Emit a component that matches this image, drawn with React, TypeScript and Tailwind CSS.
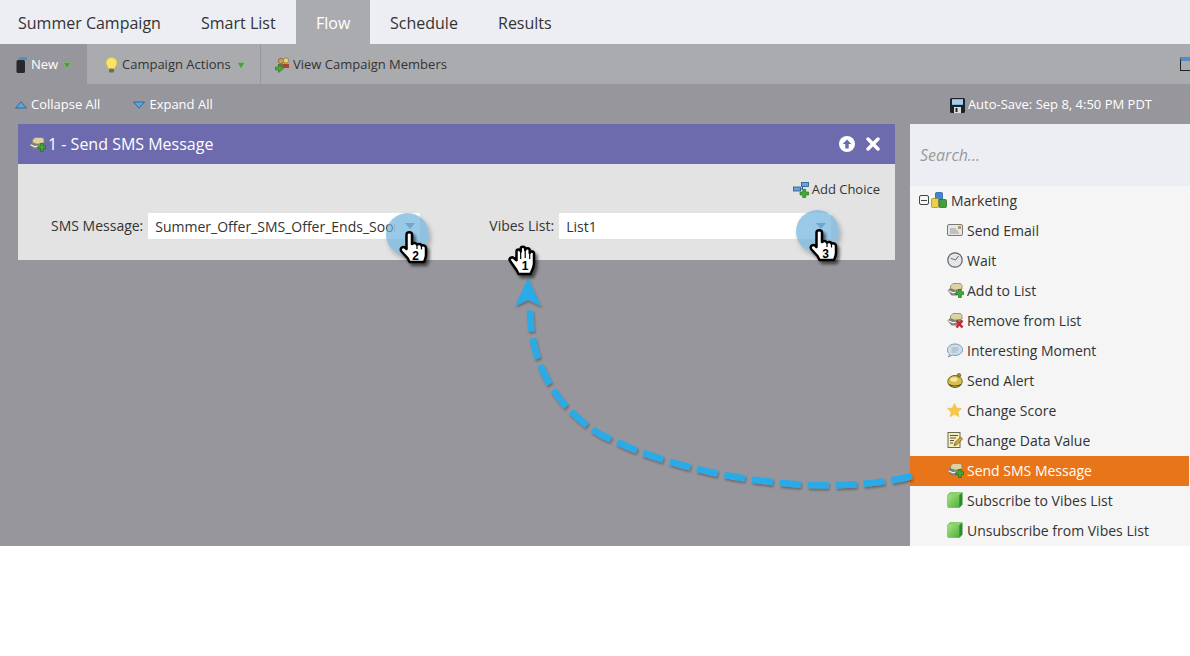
import type { ReactNode } from "react";

function CaretGreen() {
  return (
    <svg width="8" height="7" viewBox="0 0 8 7" className="shrink-0">
      <path d="M0.300 0.600h7.400L4 6.800z" fill="#4f9d33" stroke="#a9d68e" strokeWidth="0.400" />
    </svg>
  );
}

function ListIcon({ mark = "plus" }: { mark?: "plus" | "x" }) {
  return (
    <svg width="17" height="16" viewBox="0 0 17 16" className="shrink-0">
      <path d="M0.500 8.500 5 4.500h9v5l-4 4H4.500z" fill="#7f7f7b" />
      <path d="M1.500 8.800 6 10.800l6-1.500" stroke="#f4f4f0" strokeWidth="1.100" fill="none" />
      <path d="M3.500 4 6 1.500h7.500l1.500 2v3.500L8 8.200 3.500 6.500z" fill="#dcd3a0" stroke="#8a8560" strokeWidth="0.800" />
      {mark === "plus" ? (
        <path d="M9 9.800h2.500V7.500h2.800v2.300h2.300v2.800h-2.300v2.900h-2.800v-2.900H9z" fill="#45a838" stroke="#1d6d1c" strokeWidth="0.700" />
      ) : (
        <path d="M9.500 8.500 15.500 15.500M15.500 8.500 9.500 15.500" stroke="#c9252b" strokeWidth="2.400" />
      )}
    </svg>
  );
}

function MailIcon() {
  return (
    <svg width="16" height="14" viewBox="0 0 16 14" className="shrink-0">
      <rect x="0.500" y="1.500" width="15" height="11" rx="1.500" fill="#e6e6e4" stroke="#77797b" />
      <rect x="11" y="3" width="3" height="3" fill="#b59b55" />
      <path d="M3 6h6M3 8h8M3 10h9" stroke="#85878a" strokeWidth="0.800" />
    </svg>
  );
}

function ClockIcon() {
  return (
    <svg width="16" height="16" viewBox="0 0 16 16" className="shrink-0">
      <circle cx="8" cy="8" r="7.200" fill="#e4e7ea" stroke="#5d6268" strokeWidth="1.200" />
      <path d="M8.500 8 3.800 6.300M8.500 8l3-4" stroke="#555b61" strokeWidth="0.900" fill="none" />
    </svg>
  );
}

function ChatIcon() {
  return (
    <svg width="16" height="15" viewBox="0 0 16 15" className="shrink-0">
      <path d="M8 1c4 0 7.500 2.500 7.500 5.700s-3.500 5.700-7.500 5.700c-1 0-2-.1-2.800-.4L1.500 14l1-3C1.200 10 .5 8.500.5 6.700.5 3.500 4 1 8 1z" fill="#cfdfea" stroke="#7f98aa" />
      <path d="M4.500 5h7M4.500 7h7M4.500 9h5" stroke="#8da3b2" strokeWidth="0.800" />
    </svg>
  );
}

function BellIcon() {
  return (
    <svg width="16" height="15" viewBox="0 0 16 15" className="shrink-0">
      <ellipse cx="8" cy="8.500" rx="7.200" ry="6" fill="#d8bf4c" stroke="#6f5f1a" />
      <ellipse cx="7" cy="6.500" rx="3.500" ry="2.200" fill="#f3e7a4" />
      <path d="M2 11.500c3 2 9 2 12 0" stroke="#5e5117" strokeWidth="1.200" fill="none" />
      <circle cx="12" cy="2.200" r="1.800" fill="#9c8a3c" stroke="#5e5117" strokeWidth="0.600" />
    </svg>
  );
}

function StarIcon() {
  return (
    <svg width="15" height="14" viewBox="0 0 15 14" className="shrink-0">
      <path d="M7.500 0.500 9.700 5l4.800.6-3.500 3.300.9 4.800-4.400-2.400-4.400 2.400.9-4.800L.5 5.600 5.300 5z" fill="#f6c648" stroke="#eeb93a" strokeWidth="0.500" />
    </svg>
  );
}

function NoteIcon() {
  return (
    <svg width="16" height="16" viewBox="0 0 16 16" className="shrink-0">
      <rect x="1" y="0.500" width="12" height="15" fill="#f6eeb8" stroke="#6c6a55" />
      <path d="M3 3.500h8M3 6h6M3 8.500h4M3 11h3" stroke="#55554a" strokeWidth="1" />
      <path d="M7 13.500 8 10.500 13.500 5l2 2L10 12.500z" fill="#d9a73a" stroke="#5d4a1a" strokeWidth="0.700" />
    </svg>
  );
}

function CubeIcon() {
  return (
    <svg width="16" height="16" viewBox="0 0 16 16" className="shrink-0">
      <defs>
        <linearGradient id="cubeFront" x1="0" y1="0" x2="1" y2="1">
          <stop offset="0" stopColor="#a6e27f" />
          <stop offset="1" stopColor="#4fb03c" />
        </linearGradient>
      </defs>
      <path d="M0.500 3 3 .5h12.500V12.500L12.800 15.500H2c-1 0-1.500-.5-1.500-1.500z" fill="#2f8a2a" />
      <path d="M0.500 3h11.800v12.500H2c-1 0-1.500-.5-1.500-1.500z" fill="url(#cubeFront)" />
      <path d="M0.500 3 3 .5h12.500L12.300 3z" fill="#8bd268" />
    </svg>
  );
}

function BlocksIcon() {
  return (
    <svg width="16" height="16" viewBox="0 0 16 16" className="shrink-0">
      <rect x="4.500" y="0.500" width="7" height="7.500" rx="1" fill="#3f86cf" stroke="#1f5590" strokeWidth="0.700" />
      <rect x="0.500" y="6.500" width="7" height="9" rx="1" fill="#ecd04a" stroke="#96822a" strokeWidth="0.700" />
      <rect x="8" y="7.500" width="7.500" height="8" rx="1" fill="#44a03a" stroke="#23682a" strokeWidth="0.700" />
    </svg>
  );
}

function BulbIcon() {
  return (
    <svg width="13" height="16" viewBox="0 0 13 16" className="shrink-0">
      <path d="M6.500 0.500c3.200 0 5.500 2.300 5.500 5.200 0 2.400-1.800 3.600-2.300 6H3.300c-.5-2.400-2.300-3.600-2.300-6C1 2.800 3.300.5 6.500.5z" fill="#f5e56b" stroke="#c9b83e" strokeWidth="0.600" />
      <rect x="4" y="11.800" width="5" height="3.600" rx="1" fill="#6c6c6c" />
    </svg>
  );
}

function MembersIcon() {
  return (
    <svg width="17" height="16" viewBox="0 0 17 16" className="shrink-0">
      <circle cx="6" cy="4" r="2.700" fill="#c9a25a" stroke="#6a4f22" strokeWidth="0.600" />
      <circle cx="11" cy="3.500" r="2.700" fill="#e7cd7c" stroke="#7c6228" strokeWidth="0.600" />
      <path d="M8 7h6v4H8z" fill="#a8482f" />
      <path d="M3 7h5v3H3z" fill="#7a6b4a" />
      <path d="M0.500 10h3V7.500L8.500 11.500 3.500 15.500V13h-3z" fill="#49a83c" stroke="#226f20" strokeWidth="0.600" />
    </svg>
  );
}

function NewIcon() {
  return (
    <svg width="11" height="16" viewBox="0 0 11 16" className="shrink-0">
      <path d="M2 2 4 0h7v3H3z" fill="#4f8fc5" />
      <rect x="0.500" y="3" width="8.500" height="13" rx="1.500" fill="#26282b" />
    </svg>
  );
}

function DiskIcon() {
  return (
    <svg width="15" height="15" viewBox="0 0 15 15" className="shrink-0">
      <rect width="15" height="15" rx="1.500" fill="#1e2226" />
      <rect x="2" y="1" width="11" height="6" fill="#7fb5df" />
      <path d="M2 3h11M2 5h11" stroke="#e8f1f8" strokeWidth="0.800" />
      <rect x="4" y="9" width="7" height="6" fill="#dcdfe2" />
      <rect x="5.500" y="10" width="2" height="4" fill="#22262a" />
    </svg>
  );
}

function AddChoiceIcon() {
  return (
    <svg width="17" height="16" viewBox="0 0 17 16" className="shrink-0">
      <rect x="0.500" y="5" width="7" height="4" fill="#6aa2d6" stroke="#24598f" strokeWidth="0.800" />
      <rect x="8.500" y="0.500" width="7" height="4" fill="#6aa2d6" stroke="#24598f" strokeWidth="0.800" />
      <path d="M7.500 7h2V4.500" stroke="#24598f" fill="none" />
      <path d="M7 10h2.700V7.300h3V10h3v3h-3v2.700h-3V13H7z" fill="#45a838" stroke="#1d6d1c" strokeWidth="0.600" />
    </svg>
  );
}

function TriUp() {
  return (
    <svg width="12" height="8" viewBox="0 0 12 8" className="shrink-0">
      <path d="M6 0.800 11.500 7H.5z" fill="#5aa5dc" stroke="#1e5f93" strokeWidth="0.800" />
    </svg>
  );
}

function TriDown() {
  return (
    <svg width="12" height="8" viewBox="0 0 12 8" className="shrink-0">
      <path d="M.5 1h11L6 7.200z" fill="#5aa5dc" stroke="#1e5f93" strokeWidth="0.800" />
    </svg>
  );
}

// pointing hand, used for callouts 2 and 3
function PointHand({ label }: { label: string }) {
  return (
    <svg width="30" height="34" viewBox="0 0 30 34" className="overflow-visible">
      <defs>
        <filter id="pointShadow" x="-30%" y="-30%" width="170%" height="170%">
          <feDropShadow dx="2.500" dy="3" stdDeviation="1.500" floodColor="#000" floodOpacity="0.55" />
        </filter>
      </defs>
      <path
        d="M7.500 4.500c0-3 5.500-3 5.500 0V14c2-1.500 4-1 5 .5 2-1.200 4-.5 4.500 1 2-.8 4.500.2 4.500 2.500V25c0 3-1 4.500-2 7H10.500L8.500 28 2.500 21.500c-2.500-3 1.500-6 4-3.500l1 1z"
        fill="#fff"
        stroke="#000"
        strokeWidth="2.500"
        strokeLinejoin="round"
        filter="url(#pointShadow)"
      />
      <path d="M18 15v4M22.500 16v3.500" stroke="#000" strokeWidth="1.200" />
      <text x="16.500" y="29.500" textAnchor="middle" fontSize="12" fontWeight="700" fontFamily="Liberation Sans, sans-serif" fill="#000">
        {label}
      </text>
    </svg>
  );
}

// open hand, used for callout 1
function OpenHand({ label }: { label: string }) {
  return (
    <svg width="30" height="32" viewBox="0 0 30 32" className="overflow-visible">
      <defs>
        <filter id="openShadow" x="-30%" y="-30%" width="170%" height="170%">
          <feDropShadow dx="2.500" dy="3" stdDeviation="1.500" floodColor="#000" floodOpacity="0.55" />
        </filter>
      </defs>
      <path
        d="M1.800 15.500c-1.200-2.300 2-4 4-2.500l2.700 2.300V6.500c0-2.700 4-2.700 4.200 0V3.800c0-2.700 4.300-2.700 4.500 0v1.200c.2-2.500 4.300-2.500 4.500 0v3c.3-2.200 4.300-2 4.300.5V18c0 4-2 7.500-3.500 11H10.500L8.500 25z"
        fill="#fff"
        stroke="#000"
        strokeWidth="2.500"
        strokeLinejoin="round"
        filter="url(#openShadow)"
      />
      <path d="M12.700 7v7M17.200 5v8M21.700 8v6" stroke="#000" strokeWidth="1.200" />
      <text x="17" y="25" textAnchor="middle" fontSize="12" fontWeight="700" fontFamily="Liberation Sans, sans-serif" fill="#000">
        {label}
      </text>
    </svg>
  );
}

function Spot() {
  return <div className="w-[43px] h-[43px] rounded-full bg-[#6fb2de]/70 shadow-[2px_3px_5px_rgba(0,0,0,0.25)]" />;
}

function SelectBox({ value }: { value: string }) {
  return (
    <div className="w-[272px] relative h-[26px] bg-white flex items-center pl-[7px] pr-[25px] text-[14px] text-[#333]">
      <span className="overflow-hidden whitespace-nowrap">{value}</span>
      <div className="absolute right-[5px] top-[10px] w-0 h-0 border-x-[5px] border-x-transparent border-t-[6px] border-t-[#7d8896]" />
    </div>
  );
}

function PaletteRow({ icon, label, active }: { icon: ReactNode; label: string; active?: boolean }) {
  return (
    <div className={`h-[30px] w-[279px] flex items-center pl-[37px] pb-[2px] text-[14px] ${active ? "bg-[#e8751a] text-white" : "text-[#333]"}`}>
      <span className="w-[20px] flex items-center">{icon}</span>
      {label}
    </div>
  );
}

export default function App() {
  const tabs = [
    { label: "Summer Campaign", cls: "w-[181px] pl-[18px]" },
    { label: "Smart List", cls: "w-[115px] pl-5" },
    { label: "Flow", cls: "w-[74px] pl-5 bg-[#aaabaf] text-white" },
    { label: "Schedule", cls: "w-[108px] pl-5" },
    { label: "Results", cls: "pl-5" },
  ];

  return (
    <div className="w-[1190px] h-[656px] bg-white overflow-hidden relative font-['Open_Sans',sans-serif]">
      {/* Tabs */}
      <div className="h-[44px] bg-[#eceef3] flex text-[16px] text-[#333]">
        {tabs.map((t) => (
          <div key={t.label} className={`flex items-center pt-[2px] ${t.cls}`}>
            {t.label}
          </div>
        ))}
      </div>

      {/* Toolbar */}
      <div className="h-[40px] bg-[#aaabaf] flex items-stretch text-[13px] text-[#333] relative overflow-hidden">
        <div className="w-[87px] bg-[#97969c] flex items-center pl-4 pt-[2px] gap-[4px] text-white">
          <NewIcon />
          <span>New</span>
          <span className="ml-[1px]"><CaretGreen /></span>
        </div>
        <div className="w-[174px] border-r border-[#97969c] flex items-center pl-[18px] pt-[2px] gap-[4px]">
          <BulbIcon />
          <span>Campaign Actions</span>
          <span className="ml-[2px]"><CaretGreen /></span>
        </div>
        <div className="flex items-center pl-[14px] pt-[2px] gap-[1px]">
          <MembersIcon />
          <span>View Campaign Members</span>
        </div>
        <div className="absolute left-[1180px] top-[13px] w-[16px] h-[14px] border-[1.5px] border-[#222] border-t-[4px] border-t-[#4f8fc5]" />
      </div>

      {/* Canvas */}
      <div className="h-[462px] bg-[#97969c] relative overflow-hidden">
        <div className="h-[40px] flex items-center pl-[15px] pr-[38px] pt-[2px] text-[13px] text-white">
          <TriUp />
          <span className="ml-[4px]">Collapse All</span>
          <span className="ml-[33px]"><TriDown /></span>
          <span className="ml-[4px]">Expand All</span>
          <span className="ml-auto"><DiskIcon /></span>
          <span className="ml-[3px]">Auto-Save: Sep 8, 4:50 PM PDT</span>
        </div>

        <div className="flex items-start pl-[18px] gap-[15px]">
          {/* Flow step */}
          <div className="w-[877px] shrink-0">
            <div className="h-[40px] bg-[#6e6aae] flex items-center pl-[11px] pr-[15px] text-white text-[16px]">
              <ListIcon />
              <span className="ml-[2px]">1 - Send SMS Message</span>
              <svg width="16" height="16" viewBox="0 0 16 16" className="ml-auto">
                <circle cx="8" cy="8" r="8" fill="#fff" />
                <path d="M8 3.500 12.300 8H9.700v4.500H6.300V8H3.700z" fill="#6e6aae" />
              </svg>
              <svg width="14" height="14" viewBox="0 0 14 14" className="ml-[11px]">
                <path d="M2 2l10 10M12 2 2 12" stroke="#fff" strokeWidth="3.400" strokeLinecap="round" />
              </svg>
            </div>
            <div className="h-[96px] bg-[#e3e3e3] text-[#333] text-[14px] px-[15px]">
              <div className="h-[49px] flex items-center justify-end gap-[2px] pt-[3px] text-[13px]">
                <AddChoiceIcon />
                <span>Add Choice</span>
              </div>
              <div className="flex items-center pl-[18px]">
                <span className="pb-[2px]">SMS Message:</span>
                <span className="ml-[5px]">
                  <SelectBox value="Summer_Offer_SMS_Offer_Ends_Soon" />
                </span>
                <span className="ml-[69px] pb-[2px]">Vibes List:</span>
                <span className="ml-[5px]">
                  <SelectBox value="List1" />
                </span>
              </div>
            </div>
          </div>

          {/* Palette */}
          <div className="w-[280px] h-[422px] shrink-0 flex flex-col">
            <div className="h-[62px] shrink-0 bg-[#eceef3] flex items-center pl-[10px] italic text-[16px] text-[#9a9a9a]">Search...</div>
            <div className="flex-1 bg-[#f5f5f5]">
              <div className="h-[30px] flex items-center pl-[9px] pb-[2px] text-[14px] text-[#333]">
                <span className="w-[10px] h-[10px] border border-[#444] rounded-[2px] flex items-center justify-center mr-[2px]">
                  <span className="block w-[6px] h-[1px] bg-[#444]" />
                </span>
                <BlocksIcon />
                <span className="ml-[4px]">Marketing</span>
              </div>
              <PaletteRow icon={<MailIcon />} label="Send Email" />
              <PaletteRow icon={<ClockIcon />} label="Wait" />
              <PaletteRow icon={<ListIcon />} label="Add to List" />
              <PaletteRow icon={<ListIcon mark="x" />} label="Remove from List" />
              <PaletteRow icon={<ChatIcon />} label="Interesting Moment" />
              <PaletteRow icon={<BellIcon />} label="Send Alert" />
              <PaletteRow icon={<StarIcon />} label="Change Score" />
              <PaletteRow icon={<NoteIcon />} label="Change Data Value" />
              <PaletteRow icon={<ListIcon />} label="Send SMS Message" active />
              <PaletteRow icon={<CubeIcon />} label="Subscribe to Vibes List" />
              <PaletteRow icon={<CubeIcon />} label="Unsubscribe from Vibes List" />
            </div>
          </div>
        </div>
      </div>

      {/* Tutorial overlays */}
      <svg width="1190" height="656" className="absolute left-0 top-0 pointer-events-none">
        <defs>
          <filter id="arrowShadow" x="-10%" y="-10%" width="120%" height="120%">
            <feDropShadow dx="1" dy="2" stdDeviation="1.200" floodColor="#000" floodOpacity="0.3" />
          </filter>
        </defs>
        <g filter="url(#arrowShadow)">
          <path
            d="M912 476C880 484 845 486 812 485C740 482 660 465 600 434C560 410 530 368 530 309"
            fill="none"
            stroke="#29abe8"
            strokeWidth="6.500"
            strokeDasharray="21 7"
          />
          <path d="M528 278 541 306 528 300 515 306z" fill="#29abe8" />
        </g>
      </svg>
      <div className="absolute left-[386px] top-[213px]"><Spot /></div>
      <div className="absolute left-[796px] top-[210px]"><Spot /></div>
      <div className="absolute left-[399px] top-[230px]"><PointHand label="2" /></div>
      <div className="absolute left-[508px] top-[245px]"><OpenHand label="1" /></div>
      <div className="absolute left-[809px] top-[228px]"><PointHand label="3" /></div>
    </div>
  );
}
